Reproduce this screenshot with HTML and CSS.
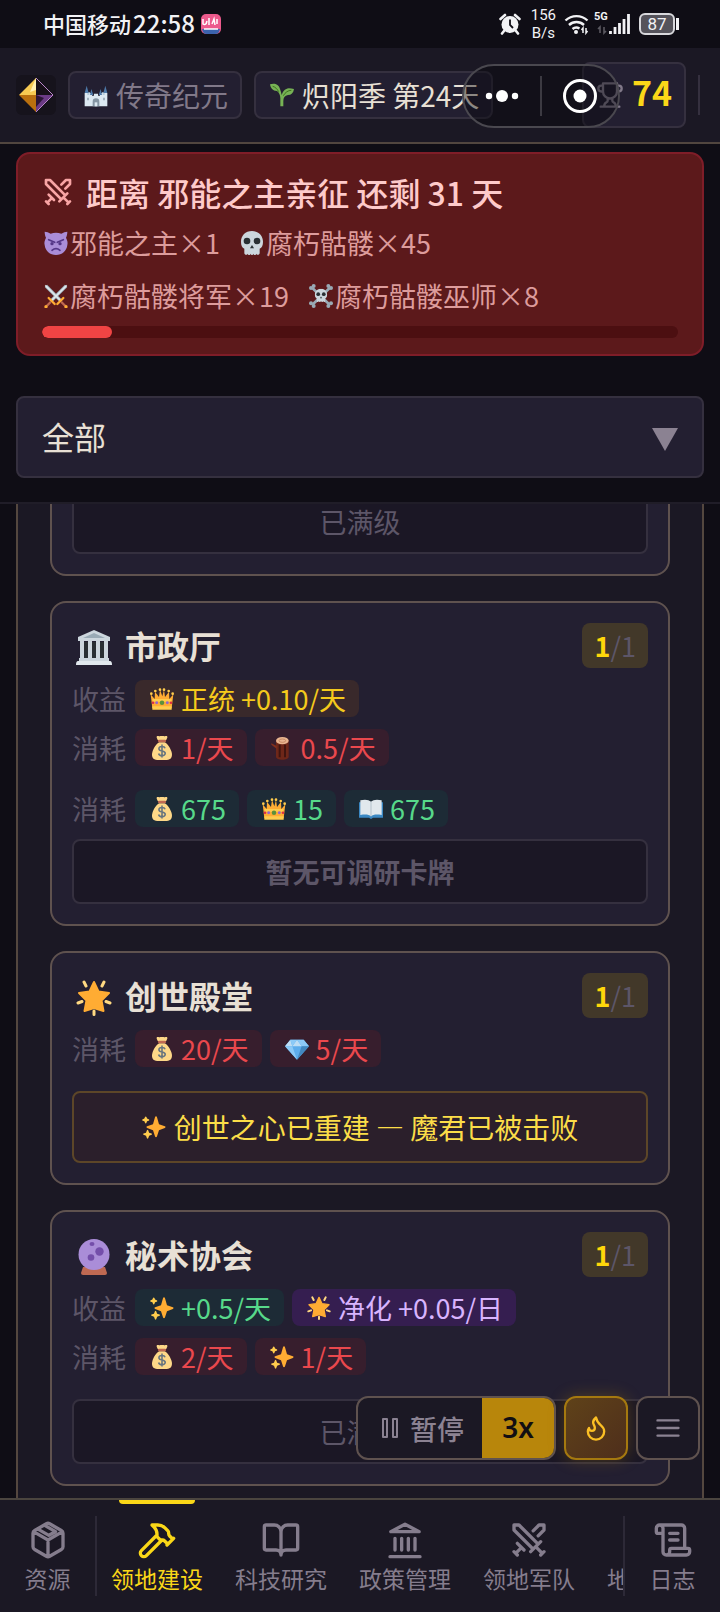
FILE: index.html
```
<!DOCTYPE html>
<html lang="zh-CN">
<head>
<meta charset="UTF-8">
<meta name="viewport" content="width=device-width, initial-scale=1.0">
<title>领地建设</title>
<link rel="stylesheet" href="styles.css">
</head>
<body>
  <!-- Shared icons -->
  <svg class="sprite" aria-hidden="true">
    <symbol id="swords" viewBox="0 0 24 24">
      <path d="M14.5 17.5 3 6V3h3l11.500 11.500M13 19l6-6M16 16l4 4M19 21l2-2M14.500 6.500 18 3h3v3l-3.500 3.500M5 14l4 4M7 17l-3 3M3 19l2 2"/>
    </symbol>
    <symbol id="money" viewBox="2 1 32 35">
      <path fill="#fdd888" d="M31.900 24c-1.500-5-5-11.500-9.900-14h-8C9 12.500 5.500 19 4.100 24 2 31 5 36 11 36h14c6 0 9-5 6.900-12z"/>
      <path fill="#fdd888" d="M12 7c-1-2-3-5-1-6 2-.6 3 1 4.500 0 1.500-1.300 3.500-1.300 5 0 1.500 1 2.500-.6 4.500 0 2 1 0 4-1 6z"/>
      <rect x="12" y="6.500" width="12" height="3.500" rx="1.700" fill="#bf6952"/>
      <path fill="none" stroke="#67757f" stroke-width="2.300" d="M22.500 19c-.6-2-2.300-2.700-4.500-2.700-2.600 0-4.500 1.200-4.500 3.200 0 4.700 9.200 2.300 9.200 6.800 0 2.200-2 3.400-4.700 3.400s-4.500-1.200-4.900-3.200M18 13.500v19"/>
    </symbol>
    <symbol id="crown" viewBox="0 0 36 36">
      <path fill="#ffac33" d="M3.500 32 1 11l6 7L7.500 7l6 8L15 4l3.500 10L21 4l1.500 11 6-8 .5 11 6-7-2.500 21z"/>
      <circle cx="2" cy="10" r="2" fill="#ffcc4d"/><circle cx="8" cy="6" r="2" fill="#ffcc4d"/><circle cx="15" cy="4" r="2" fill="#ffcc4d"/><circle cx="21" cy="4" r="2" fill="#ffcc4d"/><circle cx="28" cy="6" r="2" fill="#ffcc4d"/><circle cx="34" cy="10" r="2" fill="#ffcc4d"/>
      <path fill="#ffcc4d" d="M3.500 29h29v5h-29zM3.500 18h29l-1 4h-27z"/>
      <circle cx="18" cy="23.500" r="3.400" fill="#5c913b"/><circle cx="10" cy="23.500" r="2.200" fill="#9266cc"/><circle cx="26" cy="23.500" r="2.200" fill="#9266cc"/><circle cx="4.500" cy="23.500" r="1.900" fill="#dd2e44"/><circle cx="31.500" cy="23.500" r="1.900" fill="#dd2e44"/>
    </symbol>
    <symbol id="sparkles" viewBox="0 0 36 36">
      <path fill="#ffac33" d="M34.300 16.900 25.500 14l-3.100-10.900c-.5-1.500-2.300-1.500-2.800 0L16.500 14l-8.800 2.900c-1.300.5-1.300 2 0 2.500l8.800 3.300 3.100 9.600c.5 1.500 2.300 1.500 2.800 0l3.100-9.600 8.800-3.300c1.300-.5 1.300-2 0-2.500z"/>
      <path fill="#ffcc4d" d="m14.300 27.900-3.600-1.400-1.400-3.700c-.4-1.100-1.500-1.100-1.900 0L6 26.500l-3.600 1.400c-1 .4-1 1.500 0 1.900L6 31.200l1.400 3.700c.4 1 1.500 1 1.900 0l1.400-3.700 3.600-1.400c1-.4 1-1.500 0-1.900zM10 6.300 7.600 5.400 6.700 3c-.4-1.200-1.800-1.200-2.200 0l-.9 2.400-2.400.9c-1.200.4-1.200 1.800 0 2.200l2.400.9.900 2.400c.4 1.200 1.800 1.200 2.200 0l.9-2.400 2.400-.9c1.200-.4 1.200-1.800 0-2.200z"/>
    </symbol>
    <symbol id="star" viewBox="0 0 36 36">
      <path fill="#ffac33" stroke="#ffac33" stroke-width="2" stroke-linejoin="round" d="m18 2 4.500 9.500L33 13l-7.500 7.500L27.500 31 18 28l-9.500 3 2-10.500L3 13l10.500-1.500z"/>
      <path fill="none" stroke="#ffd983" stroke-width="3" stroke-linecap="round" d="m8 2 2 4M28 2l-2 4M2 23l4-1.500M34 23l-4-1.500M18 31v3.500"/>
    </symbol>
    <symbol id="gem" viewBox="0 0 36 36">
      <path fill="#5dadec" d="M8 4h20l8 10-18 20L0 14z"/>
      <path fill="#bdddf4" d="m8 4 3 10H0zM18 4l7 10H11z"/>
      <path fill="#8ccaf7" d="M8 4h10l-7 10zM28 4H18l7 10zM28 4l8 10H25z"/>
      <path fill="#4289c1" d="m25 14-7 20 18-20z"/>
      <path fill="#8ccaf7" d="m11 14 7 20L0 14z"/>
    </symbol>
    <symbol id="skull-face" viewBox="0 0 36 36">
      <path fill="#ccd6dd" d="M18 0C8 0 1.500 7 1.500 16c0 5.500 1.500 9 5 10.500V33c0 3 4 4 5 1 .5 2.500 4 2.500 4.500 0 .5 2.500 3.500 2.500 4 0 .5 2.500 4 2.500 4.500 0 1 3 5 2 5-1v-6.500c3.500-1.500 5-5 5-10.500C34.500 7 28 0 18 0z"/>
      <circle cx="10.500" cy="15" r="5" fill="#292f33"/><circle cx="25.500" cy="15" r="5" fill="#292f33"/>
      <path fill="#292f33" d="m18 21 3 5h-6z"/>
    </symbol>
  </svg>

  <div class="status-bar">
    <span class="carrier">中国移动</span>
    <span class="clock">22:58</span>
    <svg class="app-badge" viewBox="0 0 20 20">
      <rect width="20" height="20" rx="5" fill="#ec5a8c"/>
      <path d="M1 15h18c-.5 3-2 5-5 5H6c-3 0-4.500-2-5-5z" fill="#3b63ad"/>
      <path d="M2 5v5q3 2 4-3M8 4v7M11 10l2-5 1 6M16 5v5M3 15h14" fill="none" stroke="#fff" stroke-width="1.500"/>
    </svg>
    <div class="status-right">
      <svg class="alarm" viewBox="0 0 22 22">
        <circle cx="11" cy="11.500" r="8.500" fill="#f2f2f5"/>
        <path d="M1.500 6 6 2M20.500 6 16 2M5 18l-2 2.500M17 18l2 2.500" stroke="#f2f2f5" stroke-width="2.600" stroke-linecap="round"/>
        <path d="M11 6.500V12l3 3" fill="none" stroke="#0f0d15" stroke-width="1.800"/>
      </svg>
      <div class="speed"><div>156</div><div>B/s</div></div>
      <svg class="wifi" viewBox="0 0 25 22">
        <path d="M1.500 7.500a16 16 0 0 1 22 0M5 12a11 11 0 0 1 15 0M8.500 16a6 6 0 0 1 7-.5" fill="none" stroke="#f2f2f5" stroke-width="2.400"/>
        <circle cx="12" cy="19" r="2" fill="#f2f2f5"/>
        <path d="M19 20v-5l-1.500 2M22 15v5l1.500-2" fill="none" stroke="#f2f2f5" stroke-width="1.500"/>
      </svg>
      <div class="network">
        <span>5G</span>
        <svg viewBox="0 0 34 22">
          <path d="M3 20v-6l-2 2M7 14v6l2-2" fill="none" stroke="#5a5860" stroke-width="1.600"/>
          <path d="M13.500 21v-3M18 21v-7M22.500 21V10M27 21V6M31.500 21V1" stroke="#f2f2f5" stroke-width="2.800"/>
        </svg>
      </div>
      <span class="battery">87</span>
    </div>
  </div>

  <header class="top-bar">
    <svg class="logo" viewBox="0 0 40 40">
      <rect width="40" height="40" rx="6" fill="#16131c"/>
      <path fill="#f6ca52" d="M20 3v17L3 20z"/>
      <path fill="#b9700f" d="M3 20h17v17z"/>
      <path fill="#fff0b0" d="M20 3 14 17l6-2z"/>
      <path fill="#171019" d="M20 3v17h17z"/>
      <path fill="#6c3b86" d="M20 20h17L20 37z"/>
      <path fill="#2b1636" d="m20 20 8 3-8 9z"/>
      <path fill="none" stroke="#b885c9" stroke-width="1" d="m20 3 17 17-17 17"/>
    </svg>
    <button class="season era">
      <svg class="emoji" viewBox="0 0 36 36">
        <path fill="#b5cad9" d="M3 14h6v20H3zM27 14h6v20h-6z"/>
        <path fill="#dce9f2" d="M1 15h4v3h3v-3h4v4h3v-3h6v3h3v-4h4v3h3v-3h4v20H1z"/>
        <path fill="#4d79a8" d="M4 4 1 15h6zM32 4l-3 11h6zM11 9l-2 9h5zM25 9l-3 9h5z"/>
        <path fill="#8495a3" d="M13 35v-7a5 5 0 0 1 10 0v7zM5 22h2v4H5zM29 22h2v4h-2z"/>
        <path fill="#dce9f2" d="M16 35v-6h4v6z"/>
      </svg>
      传奇纪元
    </button>
    <button class="season">
      <svg class="emoji" viewBox="0 0 36 36">
        <path fill="#77b255" d="M15.500 35V23c0-5-2-9-5-11C4 12 1 8 0 2c6-2 13-1 15 7 1 3 2 6 2.500 9 1.500-5 4-8 7-9 2-2 7-1 11.500 0-1 6-4 9-9 9-5 1-7 4-7 9v8z"/>
        <path fill="none" stroke="#3e721d" stroke-width="1.500" d="M4 5c4 1 7 4 9 8M32 11c-5 0-9 3-12 8"/>
      </svg>
      炽阳季 第24天
    </button>
    <div class="score">
      <svg class="line-icon trophy" viewBox="0 0 24 24"><path d="M6 9H4.500a2.500 2.500 0 0 1 0-5H6M18 9h1.500a2.500 2.500 0 0 0 0-5H18M4 22h16M10 14.660V17c0 .55-.47.98-.97 1.210C7.850 18.750 7 20.240 7 22M14 14.660V17c0 .55.47.98.97 1.210C16.150 18.750 17 20.240 17 22M18 2H6v7a6 6 0 0 0 12 0z"/></svg>
      <span>74</span>
    </div>
    <div class="divider"></div>
    <!-- Mini program capsule lies over the bar -->
    <div class="capsule">
      <button aria-label="更多"><svg viewBox="0 0 34 14"><circle cx="4" cy="7" r="3.200"/><circle cx="17" cy="7" r="6"/><circle cx="30" cy="7" r="3.200"/></svg></button>
      <button aria-label="关闭"><svg viewBox="0 0 34 34"><circle cx="17" cy="17" r="15.500" fill="none" stroke="#fff" stroke-width="3"/><circle cx="17" cy="17" r="6.500"/></svg></button>
    </div>
  </header>

  <section class="threat">
    <h1><svg class="line-icon"><use href="#swords"/></svg>距离 邪能之主亲征 还剩 31 天</h1>
    <div class="enemies">
      <span>
        <svg class="emoji" viewBox="0 0 36 36">
          <path fill="#aa8dd8" d="M1 1c3 0 6 1 9 3 5-2 11-2 16 0 3-2 6-3 9-3 0 4-1 7-2 9 2 4 3 7 2 11-1 9-8 15-17 15S2 30 1 21c-1-4 0-7 2-11C2 8 1 5 1 1z"/>
          <path fill="none" stroke="#553788" stroke-width="2.500" stroke-linecap="round" d="m7 13 9 4M29 13l-9 4M12 29q6-5 12 0"/>
          <circle cx="12" cy="19" r="2.500" fill="#553788"/><circle cx="24" cy="19" r="2.500" fill="#553788"/>
        </svg>邪能之主×1
      </span>
      <span><svg class="emoji"><use href="#skull-face"/></svg>腐朽骷髅×45</span>
      <span>
        <svg class="emoji" viewBox="0 0 36 36">
          <path stroke="#9aabb6" stroke-width="5" d="M3 3l22 22M33 3 11 25"/>
          <path stroke="#dfe8ee" stroke-width="2.500" d="M2 2l24 24M34 2 10 26"/>
          <path stroke="#ffac33" stroke-width="3.500" stroke-linecap="round" d="m20 30 9-9M16 30l-9-9"/>
          <path stroke="#bf6952" stroke-width="3.500" d="m26 27 6 6M10 27l-6 6"/>
          <circle cx="33" cy="34" r="2.500" fill="#ffac33"/><circle cx="3" cy="34" r="2.500" fill="#ffac33"/>
        </svg>腐朽骷髅将军×19
      </span>
      <span>
        <svg class="emoji" viewBox="0 0 36 36">
          <path stroke="#99aab5" stroke-width="4" d="m5 6 26 25M31 6 5 31"/>
          <g fill="#99aab5"><circle cx="3" cy="6" r="3"/><circle cx="7" cy="3" r="3"/><circle cx="33" cy="6" r="3"/><circle cx="29" cy="3" r="3"/><circle cx="3" cy="29" r="3"/><circle cx="7" cy="33" r="3"/><circle cx="33" cy="29" r="3"/><circle cx="29" cy="33" r="3"/></g>
          <use href="#skull-face" x="8" y="7" width="20" height="20"/>
        </svg>腐朽骷髅巫师×8
      </span>
    </div>
    <div class="progress"><div class="progress-fill" style="width: 11%"></div></div>
  </section>

  <div class="filter">
    <select aria-label="建筑分类">
      <option>全部</option>
    </select>
  </div>

  <main class="viewport">
    <div class="panel">
      <article class="card">
        <button class="action" disabled>已满级</button>
      </article>

      <article class="card">
        <div class="card-head">
          <svg class="building" viewBox="0 0 36 36">
            <path fill="#ccd6dd" d="M18 0 34 7v4H2V7z"/>
            <path fill="#99aab5" d="m18 3 11 5H7z"/>
            <path fill="#292f33" d="M4 12h28v16H4z"/>
            <path fill="#ccd6dd" d="M4 11h4v18H4zM12 11h4v18h-4zM20 11h4v18h-4zM28 11h4v18h-4zM3 28h30v4H3z"/>
            <path fill="#e1e8ed" d="M2 31h32q2 0 2 4H0q0-4 2-4z"/>
          </svg>
          <h2>市政厅</h2>
          <span class="level"><b>1</b>/1</span>
        </div>
        <div class="row">
          <span class="row-label">收益</span>
          <span class="chip gold"><svg class="emoji"><use href="#crown"/></svg>正统 +0.10/天</span>
        </div>
        <div class="row">
          <span class="row-label">消耗</span>
          <span class="chip red"><svg class="emoji"><use href="#money"/></svg>1/天</span>
          <span class="chip red">
            <svg class="emoji" viewBox="0 0 36 36">
              <path fill="#6e2719" d="M9 6h19v25c0 6-19 6-19 0z"/>
              <path fill="#401510" d="M13 13h3v19h-3zM21 13h3v19h-3z"/>
              <path fill="#83301e" d="m2 11 8 4v4l-8-6z"/>
              <ellipse cx="18.500" cy="7" rx="9.500" ry="5.500" fill="#e9b590"/>
              <ellipse cx="18.500" cy="7" rx="5" ry="2.500" fill="none" stroke="#b87552"/>
            </svg>0.5/天
          </span>
        </div>
        <div class="row cost">
          <span class="row-label">消耗</span>
          <span class="chip green"><svg class="emoji"><use href="#money"/></svg>675</span>
          <span class="chip green"><svg class="emoji"><use href="#crown"/></svg>15</span>
          <span class="chip green">
            <svg class="emoji" viewBox="0 0 36 36">
              <path fill="#3b88c3" d="M0 8h36v23H21l-3 2-3-2H0z"/>
              <path fill="#e1e8ed" d="M2 5c7-2 13-1 16 2 3-3 9-4 16-2v22c-7-1-13-1-16 2-3-3-9-3-16-2z"/>
              <path fill="none" stroke="#b3c1cb" stroke-width="1.500" d="M18 7v22"/>
            </svg>675
          </span>
        </div>
        <button class="action strong" disabled>暂无可调研卡牌</button>
      </article>

      <article class="card">
        <div class="card-head">
          <svg class="building"><use href="#star"/></svg>
          <h2>创世殿堂</h2>
          <span class="level"><b>1</b>/1</span>
        </div>
        <div class="row">
          <span class="row-label">消耗</span>
          <span class="chip red"><svg class="emoji"><use href="#money"/></svg>20/天</span>
          <span class="chip red"><svg class="emoji"><use href="#gem"/></svg>5/天</span>
        </div>
        <div class="notice"><svg class="emoji"><use href="#sparkles"/></svg>创世之心已重建 — 魔君已被击败</div>
      </article>

      <article class="card">
        <div class="card-head">
          <svg class="building" viewBox="0 0 36 36">
            <path fill="#bf6952" d="M7 28h22l2 6q0 2-2 2H7q-2 0-2-2z"/>
            <circle cx="18" cy="15.500" r="15.500" fill="#aa8dd8"/>
            <circle cx="23.500" cy="12.500" r="4.200" fill="#744eaa"/><circle cx="15" cy="18.500" r="3.300" fill="#744eaa"/><ellipse cx="16" cy="5" rx="2.500" ry="2" fill="#744eaa"/>
          </svg>
          <h2>秘术协会</h2>
          <span class="level"><b>1</b>/1</span>
        </div>
        <div class="row">
          <span class="row-label">收益</span>
          <span class="chip green"><svg class="emoji"><use href="#sparkles"/></svg>+0.5/天</span>
          <span class="chip purple"><svg class="emoji"><use href="#star"/></svg>净化 +0.05/日</span>
        </div>
        <div class="row">
          <span class="row-label">消耗</span>
          <span class="chip red"><svg class="emoji"><use href="#money"/></svg>2/天</span>
          <span class="chip red"><svg class="emoji"><use href="#sparkles"/></svg>1/天</span>
        </div>
        <button class="action spaced" disabled>已满级</button>
      </article>
    </div>
  </main>

  <!-- Floating time controls -->
  <div class="controls">
    <div class="time-group">
      <button class="pause"><svg class="line-icon" viewBox="0 0 24 24"><path d="M5 3h4v18H5zM15 3h4v18h-4z"/></svg>暂停</button>
      <button class="speed-btn">3x</button>
    </div>
    <button class="square fire" aria-label="加速"><svg class="line-icon" viewBox="0 0 24 24"><path d="M8.500 14.500A2.500 2.500 0 0 0 11 12c0-1.380-.5-2-1-3-1.072-2.143-.224-4.054 2-6 .5 2.500 2 4.900 4 6.500 2 1.600 3 3.500 3 5.500a7 7 0 1 1-14 0c0-1.153.433-2.294 1-3a2.500 2.500 0 0 0 2.500 2.500z"/></svg></button>
    <button class="square" aria-label="菜单"><svg class="line-icon" viewBox="0 0 24 24"><path d="M3 5.500h18M3 12h18M3 18.500h18"/></svg></button>
  </div>

  <nav class="tabs">
    <a class="tab side" href="#resources">
      <svg class="line-icon" viewBox="0 0 24 24"><path d="M11 21.730a2 2 0 0 0 2 0l7-4A2 2 0 0 0 21 16V8a2 2 0 0 0-1-1.730l-7-4a2 2 0 0 0-2 0l-7 4A2 2 0 0 0 3 8v8a2 2 0 0 0 1 1.730zM12 22V12M3.300 7 12 12l8.700-5M6 5.500l6.500 3.700 4-2.200-6.500-3.800"/></svg>
      资源
    </a>
    <div class="tab-scroll">
      <a class="tab active" href="#build">
        <svg class="line-icon" viewBox="0 0 24 24"><path d="m15 12-9.373 9.373a1 1 0 0 1-3.001-3L12 9M18 15l4-4M21.500 11.500l-1.914-1.914A2 2 0 0 1 19 8.172v-.344a2 2 0 0 0-.586-1.414l-1.657-1.657A6 6 0 0 0 12.516 3H9l1.243 1.243A6 6 0 0 1 12 8.485V10l2 2h1.172a2 2 0 0 1 1.414.586L18.500 14.500"/></svg>
        领地建设
      </a>
      <a class="tab" href="#research">
        <svg class="line-icon" viewBox="0 0 24 24"><path d="M12 7v14M3 18a1 1 0 0 1-1-1V4a1 1 0 0 1 1-1h5a4 4 0 0 1 4 4 4 4 0 0 1 4-4h5a1 1 0 0 1 1 1v13a1 1 0 0 1-1 1h-6a3 3 0 0 0-3 3 3 3 0 0 0-3-3z"/></svg>
        科技研究
      </a>
      <a class="tab" href="#policy">
        <svg class="line-icon" viewBox="0 0 24 24"><path d="M6 18v-7M10 18v-7M14 18v-7M18 18v-7M3 22h18M12 2.500 3.500 7h17z"/></svg>
        政策管理
      </a>
      <a class="tab" href="#army">
        <svg class="line-icon"><use href="#swords"/></svg>
        领地军队
      </a>
      <a class="tab cut" href="#map">地</a>
    </div>
    <a class="tab side" href="#log">
      <svg class="line-icon" viewBox="0 0 24 24"><path d="M15 12h-5M15 8h-5M19 17V5a2 2 0 0 0-2-2H4M8 21h12a2 2 0 0 0 2-2v-1a1 1 0 0 0-1-1H11a1 1 0 0 0-1 1v1a2 2 0 1 1-4 0V5a2 2 0 1 0-4 0v2a1 1 0 0 0 1 1h3"/></svg>
      日志
    </a>
  </nav>
</body>
</html>
```
FILE: styles.css
```
* {
  box-sizing: border-box;
}

body {
  position: relative;
  display: flex;
  flex-direction: column;
  height: 100vh;
  margin: 0;
  overflow: hidden;
  background: #0f0d15;
  color: #e8e0d5;
  font-family: "Noto Sans CJK SC", sans-serif;
  font-size: 27px;
}

button,
select {
  font: inherit;
  color: inherit;
}

button {
  margin: 0;
  padding: 0;
  border: 0;
  background: none;
}

.sprite {
  position: absolute;
  width: 0;
  height: 0;
}

.emoji {
  flex: none;
  width: 24px;
  height: 24px;
}

.line-icon {
  flex: none;
  width: 28px;
  height: 28px;
  fill: none;
  stroke: currentColor;
  stroke-width: 2;
  stroke-linecap: round;
  stroke-linejoin: round;
}

/* Phone status bar */
.status-bar {
  display: flex;
  flex: none;
  align-items: center;
  height: 48px;
  padding: 0 41px 0 43px;
  color: #f2f2f5;
}

.carrier,
.clock {
  font-weight: 500;
  line-height: 46px;
  padding-bottom: 2px;
}

.carrier {
  font-size: 22px;
}

.clock {
  margin: 0 6px 0 2px;
  font-size: 24px;
}

.app-badge {
  width: 20px;
  height: 20px;
}

.status-right {
  display: flex;
  align-items: center;
  gap: 8px;
  margin-left: auto;
  font-family: Roboto, sans-serif;
}

.alarm {
  width: 22px;
  height: 22px;
  margin-right: 2px;
}

.speed {
  font-size: 15px;
  line-height: 18px;
  text-align: center;
}

.wifi {
  width: 25px;
  height: 22px;
}

.network {
  position: relative;
  width: 34px;
  height: 22px;
}

.network svg {
  display: block;
}

.network span {
  position: absolute;
  top: -2px;
  left: -3px;
  font-size: 11px;
  font-weight: bold;
  line-height: 12px;
}

.battery {
  position: relative;
  width: 36px;
  height: 22px;
  margin-right: 4px;
  border: 2px solid #d8d8dc;
  border-radius: 6px;
  background: #55535b;
  font-size: 17px;
  line-height: 18px;
  text-align: center;
}

.battery::after {
  content: '';
  position: absolute;
  top: 3px;
  right: -6px;
  width: 3px;
  height: 12px;
  background: #f2f2f5;
}

/* Header */
.top-bar {
  position: relative;
  display: flex;
  flex: none;
  align-items: center;
  gap: 12px;
  height: 96px;
  padding: 0 20px 0 16px;
  border-bottom: 2px solid #51463f;
  background: #1b1824;
}

.logo {
  flex: none;
  width: 40px;
  height: 40px;
}

.season {
  display: flex;
  align-items: center;
  gap: 8px;
  height: 48px;
  padding: 0 12px 0 14px;
  border: 2px solid #35303f;
  border-radius: 8px;
  background: #231f31;
  font-size: 28px;
  white-space: nowrap;
}

.era {
  color: #817989;
}

.score {
  display: flex;
  align-items: center;
  gap: 8px;
  height: 66px;
  margin-left: auto;
  padding: 0 12px;
  border: 2px solid #35303f;
  border-radius: 8px;
  background: #231f31;
  color: #fad718;
  font-size: 34px;
  font-weight: bold;
  line-height: 50px;
}

.score span {
  padding-bottom: 6px;
}

.trophy {
  color: #817989;
}

.divider {
  width: 2px;
  height: 40px;
  background: #35303f;
}

.capsule {
  position: absolute;
  top: 16px;
  right: 100px;
  display: flex;
  align-items: center;
  width: 158px;
  height: 64px;
  border: 2px solid #4a484f;
  border-radius: 32px;
  background: rgba(5, 5, 10, 0.4);
}

.capsule button {
  display: flex;
  flex: 1;
  align-items: center;
  justify-content: center;
  height: 40px;
}

.capsule button + button {
  border-left: 2px solid #3c3a42;
}

.capsule svg {
  width: 34px;
  fill: #fff;
}

/* Boss countdown */
.threat {
  flex: none;
  margin: 8px 16px 40px;
  padding: 14px 24px 16px;
  border: 2px solid #7f1d28;
  border-radius: 14px;
  background: #5c191b;
  color: #dd9c9c;
}

.threat h1 {
  display: flex;
  align-items: center;
  gap: 12px;
  margin: 0;
  color: #fecaca;
  font-size: 32px;
  font-weight: 500;
  line-height: 48px;
}

.threat h1 svg {
  width: 32px;
  height: 32px;
  color: #f8a5a5;
}

.enemies {
  display: flex;
  flex-wrap: wrap;
  column-gap: 18px;
  line-height: 53px;
}

.enemies span {
  display: flex;
  align-items: center;
}

.enemies .emoji {
  margin: 0 2px;
}

.progress {
  height: 12px;
  margin-top: 4px;
  overflow: hidden;
  border-radius: 6px;
  background: #4c0f11;
}

.progress-fill {
  height: 100%;
  border-radius: 6px;
  background: #ef4444;
}

/* Category filter */
.filter {
  position: relative;
  flex: none;
  padding: 0 16px 24px;
  border-bottom: 2px solid #201d28;
}

.filter select {
  display: block;
  width: 100%;
  height: 82px;
  padding: 0 24px 2px;
  appearance: none;
  border: 2px solid #35303f;
  border-radius: 8px;
  background: #231f31;
  font-size: 32px;
}

.filter::after {
  content: '';
  position: absolute;
  top: 32px;
  right: 42px;
  width: 26px;
  height: 23px;
  background: #8b8292;
  clip-path: polygon(0 0, 100% 0, 50% 100%);
  pointer-events: none;
}

/* Building list */
.viewport {
  flex: 1;
  min-height: 0;
  padding: 0 16px;
  overflow: hidden;
}

.panel {
  display: flex;
  flex-direction: column;
  gap: 25px;
  min-height: 100%;
  padding: 0 32px;
  border: solid #54473f;
  border-width: 0 2px;
  background: #1b1824;
}

.card {
  padding: 20px;
  border: 2px solid #5f524f;
  border-radius: 16px;
  background: #231f31;
}

/* The list is scrolled part way into its first card */
.card:first-child {
  margin-top: -37px;
}

.card-head {
  display: flex;
  align-items: center;
  height: 45px;
}

.building {
  width: 36px;
  height: 36px;
  margin: 4px 13px 0 4px;
}

.card-head h2 {
  margin: 0;
  font-size: 32px;
  font-weight: bold;
  line-height: 45px;
}

.level {
  margin-left: auto;
  padding: 0 12px;
  border-radius: 8px;
  background: #423829;
  color: #5d5668;
  line-height: 45px;
}

.level b {
  color: #ffd70a;
}

.row {
  display: flex;
  align-items: center;
  gap: 8px;
  margin-top: 12px;
  line-height: 37px;
}

.cost {
  margin-top: 24px;
}

.row-label {
  width: 55px;
  color: #5d5668;
}

.chip {
  display: flex;
  align-items: center;
  gap: 7px;
  padding: 0 13px 0 15px;
  border-radius: 8px;
}

.gold {
  background: #39292b;
  color: #f5ca1c;
}

.red {
  background: #371e2d;
  color: #ea484d;
}

.green {
  background: #1d2b36;
  color: #57d98a;
}

.purple {
  background: #351e50;
  color: #d8b4fe;
}

.action {
  display: block;
  width: 100%;
  height: 65px;
  margin-top: 12px;
  border: 2px solid #35303f;
  border-radius: 8px;
  background: #1b1725;
  color: #5d5668;
}

.action:first-child {
  margin-top: 0;
}

.strong {
  font-weight: bold;
}

.spaced {
  margin-top: 24px;
}

.notice {
  display: flex;
  align-items: center;
  justify-content: center;
  gap: 8px;
  height: 72px;
  margin-top: 24px;
  border: 2px solid #5d4628;
  border-radius: 8px;
  background: #2b1f2b;
  color: #fbdd48;
  font-size: 28px;
}

/* Floating buttons */
.controls {
  position: absolute;
  right: 20px;
  bottom: 152px;
  display: flex;
  gap: 8px;
  height: 64px;
}

.time-group {
  display: flex;
  overflow: hidden;
  border: 2px solid #5f524f;
  border-radius: 12px;
  background: #1b1824;
}

.pause {
  display: flex;
  align-items: center;
  gap: 8px;
  padding: 0 18px 0 20px;
  color: #8b8292;
  font-weight: 500;
}

.pause svg {
  width: 24px;
  height: 24px;
}

.speed-btn {
  width: 72px;
  padding-bottom: 3px;
  background: #b8860b;
  color: #120e12;
  font-family: "Noto Sans", sans-serif;
  font-size: 28px;
  font-weight: 600;
}

.square {
  display: flex;
  align-items: center;
  justify-content: center;
  width: 64px;
  border: 2px solid #5f524f;
  border-radius: 12px;
  background: #1b1824;
  color: #8b8292;
}

.fire {
  border-color: #a5790f;
  background: linear-gradient(135deg, #5f4219, #4e2e1b);
  box-shadow: 0 0 16px rgba(184, 134, 11, 0.3);
  color: #fbbf24;
}

/* Bottom tabs */
.tabs {
  display: flex;
  flex: none;
  height: 114px;
  border-top: 2px solid #4b453f;
  background: #1b1824;
}

.tab {
  position: relative;
  display: flex;
  flex: none;
  flex-direction: column;
  align-items: center;
  padding: 20px 16px 0;
  color: #857d8d;
  font-size: 23px;
  line-height: 37px;
  text-decoration: none;
}

.tab .line-icon {
  width: 40px;
  height: 40px;
}

.side {
  width: 95px;
}

.tab-scroll {
  position: relative;
  display: flex;
  flex: 1;
  overflow: hidden;
}

.tab-scroll::before,
.tab-scroll::after {
  content: '';
  position: absolute;
  top: 16px;
  left: 0;
  width: 2px;
  height: 80px;
  background: #2d2937;
}

.tab-scroll::after {
  right: 0;
  left: auto;
}

.active {
  color: #fad718;
}

.active::before {
  content: '';
  position: absolute;
  top: 0;
  width: 76px;
  height: 4px;
  border-radius: 0 0 4px 4px;
  background: #fad718;
}

.cut {
  padding-top: 60px;
}
```
